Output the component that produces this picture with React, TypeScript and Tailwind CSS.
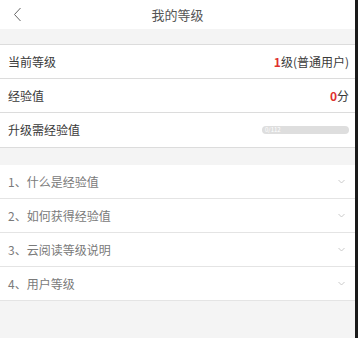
import React from 'react';

const font = { fontFamily: '"Noto Sans CJK SC", "Liberation Sans", sans-serif' };

const InfoRow = ({ label, children, last = false }: { label: string; children: React.ReactNode; last?: boolean }) => (
  <div className={`flex h-[34px] items-center justify-between pl-2 pr-[6px] ${last ? '' : 'border-b border-[#dcdcdc]'}`}>
    <span className="text-[12px] text-[#3a3a3a]">{label}</span>
    <div className="text-[12px] text-[#3a3a3a]">{children}</div>
  </div>
);

const FaqRow = ({ title }: { title: string }) => (
  <div className="flex h-[34px] items-center justify-between border-b border-[#e4e4e4] pl-2 pr-[10px]">
    <span className="text-[12px] text-[#7a7a7a]">{title}</span>
    <svg width="7" height="5" viewBox="0 0 7 5" fill="none">
      <path d="M0.5 1L3.5 4L6.5 1" stroke="#c4c4c4" strokeWidth="0.9" />
    </svg>
  </div>
);

export default function App() {
  return (
    <div className="flex h-[338px] w-[358px] overflow-hidden" style={font}>
      <div className="flex flex-1 flex-col bg-[#f4f4f4]">
        <header className="relative flex h-[29px] items-center justify-center bg-white">
          <svg className="absolute left-[13px] top-[7px]" width="9" height="15" viewBox="0 0 9 15" fill="none">
            <path d="M7.5 1L1.5 7.5L7.5 14" stroke="#666" strokeWidth="1" />
          </svg>
          <span className="text-[13px] text-[#555]">我的等级</span>
        </header>

        <div className="mt-[15px] border-y border-[#dcdcdc] bg-white">
          <InfoRow label="当前等级">
            <span className="font-bold text-[#e0302e]">1</span>级(普通用户)
          </InfoRow>
          <InfoRow label="经验值">
            <span className="font-bold text-[#e0302e]">0</span>分
          </InfoRow>
          <InfoRow label="升级需经验值" last>
            <div className="flex h-[8px] w-[87px] items-center rounded-full bg-[#dedede] pl-[3px]">
              <span className="text-[6px] leading-none text-white">0/112</span>
            </div>
          </InfoRow>
        </div>

        <div className="mt-[17px] bg-white">
          <FaqRow title="1、什么是经验值" />
          <FaqRow title="2、如何获得经验值" />
          <FaqRow title="3、云阅读等级说明" />
          <FaqRow title="4、用户等级" />
        </div>
      </div>
      <div className="w-[3px] bg-[#1a1a1a]" />
    </div>
  );
}
